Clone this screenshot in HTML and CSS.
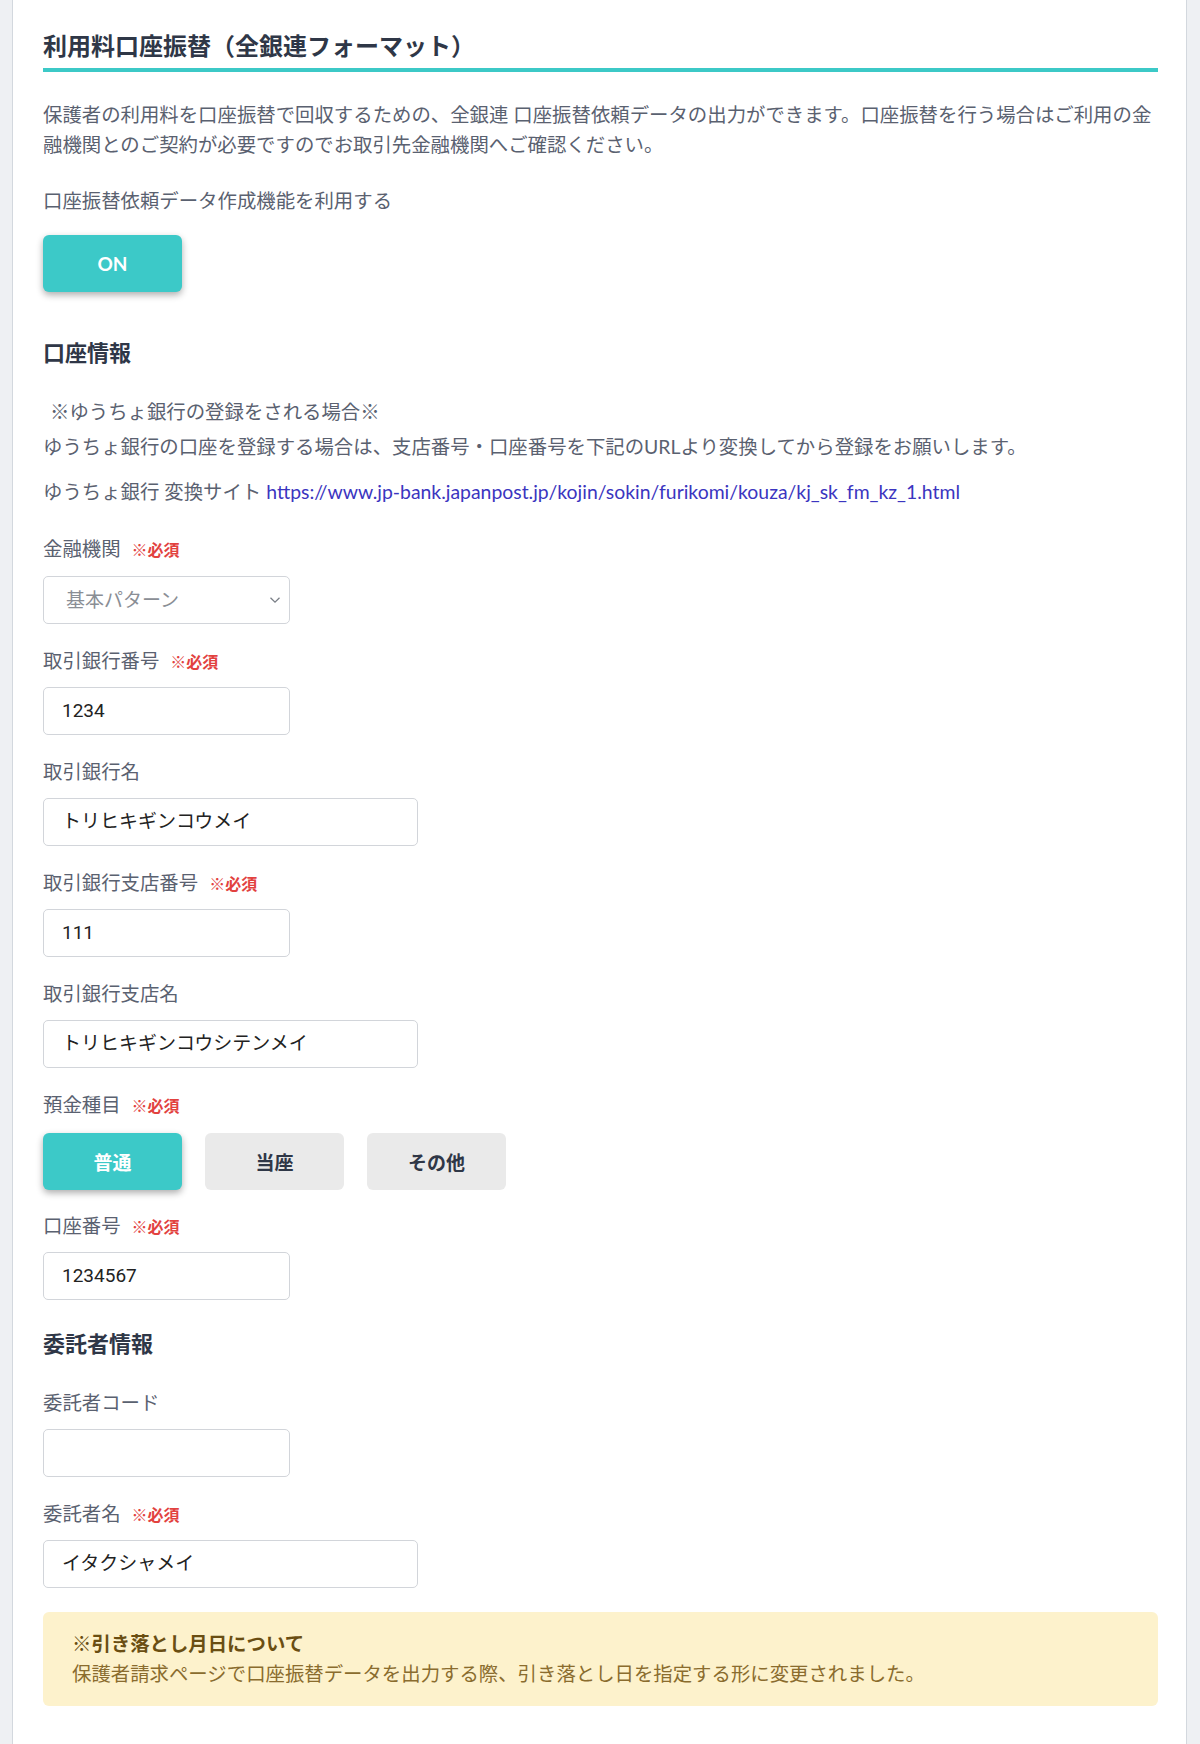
FILE: index.html
```html
<!DOCTYPE html>
<html lang="ja">
<head>
<meta charset="utf-8">
<title>利用料口座振替</title>
<link rel="stylesheet" href="styles.css">
</head>
<body>
<div class="panel">
  <h2 class="page-title">利用料口座振替（全銀連フォーマット）</h2>
  <p class="lead">保護者の利用料を口座振替で回収するための、全銀連 口座振替依頼データの出力ができます。口座振替を行う場合はご利用の金融機関とのご契約が必要ですのでお取引先金融機関へご確認ください。</p>

  <div class="use-label">口座振替依頼データ作成機能を利用する</div>
  <div class="btn-row first-btn"><button class="btn btn-on">ON</button></div>

  <h3 class="section-title">口座情報</h3>
  <p class="note-head">※ゆうちょ銀行の登録をされる場合※</p>
  <p class="note-line">ゆうちょ銀行の口座を登録する場合は、支店番号・口座番号を下記のURLより変換してから登録をお願いします。</p>
  <p class="note-link">ゆうちょ銀行 変換サイト <a href="#">https://www.jp-bank.japanpost.jp/kojin/sokin/furikomi/kouza/kj_sk_fm_kz_1.html</a></p>

  <div class="field first-field">
    <label class="label">金融機関<span class="req">※必須</span></label>
    <div class="select">
      <span class="select-text">基本パターン</span>
      <svg class="chev" width="12" height="8" viewBox="0 0 12 8"><path d="M1.5 1.8 L6 6.2 L10.5 1.8" fill="none" stroke="#7a7f87" stroke-width="1.3"/></svg>
    </div>
  </div>

  <div class="field">
    <label class="label">取引銀行番号<span class="req">※必須</span></label>
    <div class="input short">1234</div>
  </div>

  <div class="field">
    <label class="label">取引銀行名</label>
    <div class="input wide">トリヒキギンコウメイ</div>
  </div>

  <div class="field">
    <label class="label">取引銀行支店番号<span class="req">※必須</span></label>
    <div class="input short">111</div>
  </div>

  <div class="field">
    <label class="label">取引銀行支店名</label>
    <div class="input wide">トリヒキギンコウシテンメイ</div>
  </div>

  <div class="field">
    <label class="label">預金種目<span class="req">※必須</span></label>
    <div class="btn-row type-row">
      <button class="btn btn-on">普通</button>
      <button class="btn btn-off">当座</button>
      <button class="btn btn-off">その他</button>
    </div>
  </div>

  <div class="field after-btns">
    <label class="label">口座番号<span class="req">※必須</span></label>
    <div class="input short">1234567</div>
  </div>

  <h3 class="section-title sec2">委託者情報</h3>

  <div class="field first-field2">
    <label class="label">委託者コード</label>
    <div class="input short"></div>
  </div>

  <div class="field">
    <label class="label">委託者名<span class="req">※必須</span></label>
    <div class="input wide">イタクシャメイ</div>
  </div>

  <div class="notice">
    <div class="notice-title">※引き落とし月日について</div>
    <div class="notice-body">保護者請求ページで口座振替データを出力する際、引き落とし日を指定する形に変更されました。</div>
  </div>
</div>
</body>
</html>
```

FILE: styles.css
```css
* { box-sizing: border-box; }

html, body {
  margin: 0;
  padding: 0;
  background: #eef0f3;
}

body {
  font-family: Lato, "Noto Sans CJK JP", sans-serif;
  font-size: 19.4px;
  line-height: 30px;
  color: #5a6170;
}

.panel {
  margin: 0 13px 0 12px;
  background: #fff;
  border-left: 1px solid #d3d8de;
  border-right: 1px solid #d3d8de;
  min-height: 1744px;
  padding: 31px 28px 40px 30px;
  display: flex;
  flex-direction: column;
  align-items: flex-start;
}

.page-title {
  align-self: stretch;
  margin: 0;
  font-size: 24px;
  line-height: 30px;
  font-weight: 700;
  color: #2f3747;
  padding-bottom: 7px;
  border-bottom: 4px solid #3cc9c7;
}

.lead {
  margin: 28px 0 0;
}

.use-label {
  margin-top: 26px;
}

.btn-row {
  display: flex;
  gap: 23px;
}

.first-btn { margin-top: 19px; }

.btn {
  width: 139px;
  height: 57px;
  border: none;
  border-radius: 6px;
  font-family: Lato, "Noto Sans CJK JP", sans-serif;
  font-size: 19px;
  font-weight: 700;
  padding: 0;
  cursor: pointer;
}

.btn-on {
  background: #3cc9c8;
  color: #fff;
  box-shadow: 0 3px 7px rgba(0, 0, 0, 0.32);
}

.btn-off {
  background: #eaeaea;
  color: #2f3747;
}

.section-title {
  margin: 46px 0 0;
  font-size: 22px;
  line-height: 30px;
  font-weight: 700;
  color: #2f3747;
}

.sec2 { margin-top: 29px; }

.note-head {
  margin: 29px 0 0 7px;
}

.note-line {
  margin: 5px 0 0;
}

.note-link {
  margin: 15px 0 0;
}

.note-link a {
  color: #3b35c0;
  text-decoration: none;
}

.field {
  margin-top: 22px;
  display: flex;
  flex-direction: column;
  align-items: flex-start;
}

.first-field { margin-top: 27px; }
.first-field2 { margin-top: 29px; }
.after-btns { margin-top: 21px; }

.label {
  display: block;
  height: 30px;
}

.req {
  margin-left: 11px;
  color: #e2423f;
  font-weight: 700;
  font-size: 16px;
}

.input, .select {
  margin-top: 11px;
  height: 48px;
  border: 1px solid #d2d5da;
  border-radius: 5px;
  background: #fff;
  font-family: Roboto, "Noto Sans CJK JP", sans-serif;
  font-size: 19px;
  color: #222;
  display: flex;
  align-items: center;
  padding-left: 18px;
}

.short { width: 247px; }
.wide { width: 375px; }

.select {
  width: 247px;
  padding-left: 22px;
  padding-right: 8px;
  justify-content: space-between;
  color: #8a8e95;
  font-family: Lato, "Noto Sans CJK JP", sans-serif;
  margin-top: 12px;
}

.chev { flex: none; }

.type-row { margin-top: 13px; }

.notice {
  align-self: stretch;
  margin-top: 24px;
  background: #fdf2cc;
  border-radius: 6px;
  padding: 17px 29px 17px 29px;
}

.notice-title {
  font-weight: 700;
  color: #6a4e12;
}

.notice-body {
  color: #8a6c2e;
}
```
